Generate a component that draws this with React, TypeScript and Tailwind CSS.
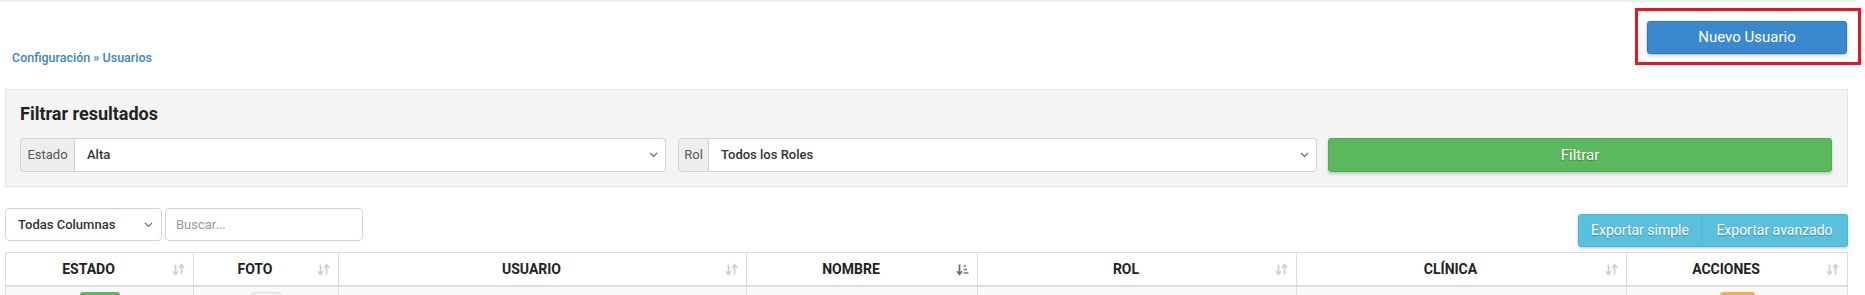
import React from "react";

const SortBoth = () => (
  <svg width="13" height="13" viewBox="0 0 13 13" fill="none">
    <path d="M3.5 1.5V11" stroke="#cfcfcf" strokeWidth="1.8" />
    <path d="M1 8.3L3.5 11.5L6 8.3" stroke="#cfcfcf" strokeWidth="1.6" fill="none" />
    <path d="M9.5 2V11.5" stroke="#cfcfcf" strokeWidth="1.8" />
    <path d="M7 4.7L9.5 1.5L12 4.7" stroke="#cfcfcf" strokeWidth="1.6" fill="none" />
  </svg>
);

const SortAsc = () => (
  <svg width="13" height="13" viewBox="0 0 13 13" fill="none">
    <path d="M3.5 1.5V11" stroke="#6f6f6f" strokeWidth="1.8" />
    <path d="M1 8.3L3.5 11.5L6 8.3" stroke="#6f6f6f" strokeWidth="1.6" fill="none" />
    <path d="M7.5 3H10" stroke="#6f6f6f" strokeWidth="1.4" />
    <path d="M7.5 6.5H11" stroke="#6f6f6f" strokeWidth="1.4" />
    <path d="M7.5 10H12.5" stroke="#6f6f6f" strokeWidth="1.4" />
  </svg>
);

const Chevron = () => (
  <svg width="9" height="6" viewBox="0 0 9 6" fill="none">
    <path d="M1 1L4.5 4.5L8 1" stroke="#666" strokeWidth="1.1" />
  </svg>
);

const cols: { label: string; w: string; sort: "both" | "asc"; last?: boolean }[] = [
  { label: "ESTADO", w: "w-[188px]", sort: "both" },
  { label: "FOTO", w: "w-[145px]", sort: "both" },
  { label: "USUARIO", w: "w-[408px]", sort: "both" },
  { label: "NOMBRE", w: "w-[231px]", sort: "asc" },
  { label: "ROL", w: "w-[319px]", sort: "both" },
  { label: "CLÍNICA", w: "w-[330px]", sort: "both" },
  { label: "ACCIONES", w: "w-[220px]", sort: "both", last: true },
];

export default function App() {
  return (
    <div className="w-[1865px] h-[295px] overflow-hidden bg-white font-['Roboto',sans-serif] text-[#333]">
      <div className="h-[2px] w-[1856px] bg-[#ececec]" />

      <div className="mt-[6px] flex items-start justify-between pr-[4px]">
        <div className="ml-[12px] mt-[43px] text-[12.5px] font-medium leading-[14px] text-[#3a85c6]">
          Configuración » Usuarios
        </div>
        <div className="border-[3px] border-[#e5171f] pl-[9px] pr-[11px] pt-[10px] pb-[8px]">
          <button className="flex h-[33px] w-[200px] items-center justify-center rounded-[3px] border border-[#2f79b9] bg-[#3a89cf] text-[15px] text-white shadow-[0_1px_3px_rgba(0,0,0,0.3)]">
            Nuevo Usuario
          </button>
        </div>
      </div>

      <div className="ml-[5px] mt-[24px] w-[1843px] border border-[#e4e4e4] bg-[#f4f4f4] px-[14px] pt-[14px] pb-[14px]">
        <div className="text-[18px] font-bold leading-[20px] text-[#222]">Filtrar resultados</div>
        <div className="mt-[14px] flex h-[34px]">
          <div className="flex w-[646px]">
            <div className="flex w-[55px] items-center justify-center rounded-l-[4px] border border-[#d2d2d2] bg-[#eeeeee] text-[13px] text-[#555]">
              Estado
            </div>
            <div className="flex flex-1 items-center justify-between rounded-r-[4px] border border-l-0 border-[#d2d2d2] bg-white pl-[12px] pr-[7px]">
              <span className="text-[13px] font-medium text-[#333]">Alta</span>
              <Chevron />
            </div>
          </div>
          <div className="ml-[12px] flex w-[639px]">
            <div className="flex w-[31px] items-center justify-center rounded-l-[4px] border border-[#d2d2d2] bg-[#eeeeee] text-[13px] text-[#555]">
              Rol
            </div>
            <div className="flex flex-1 items-center justify-between rounded-r-[4px] border border-l-0 border-[#d2d2d2] bg-white pl-[12px] pr-[7px]">
              <span className="text-[13px] font-medium text-[#333]">Todos los Roles</span>
              <Chevron />
            </div>
          </div>
          <button className="ml-[11px] flex w-[504px] items-center justify-center rounded-[3px] border border-[#4cae4c] bg-[#5cb85c] text-[15px] text-white shadow-[0_2px_3px_rgba(0,0,0,0.2)] [text-shadow:0_1px_1px_rgba(0,0,0,0.35)]">
            Filtrar
          </button>
        </div>
      </div>

      <div className="ml-[5px] mt-[21px] flex w-[1843px] items-end justify-between">
        <div className="mb-[6px] flex h-[33px] gap-[3px]">
          <div className="flex w-[157px] items-center justify-between rounded-[4px] border border-[#d2d2d2] bg-white pl-[12px] pr-[8px]">
            <span className="text-[13px] font-medium text-[#333]">Todas Columnas</span>
            <Chevron />
          </div>
          <div className="flex w-[198px] items-center rounded-[4px] border border-[#d2d2d2] bg-white pl-[10px]">
            <span className="text-[13px] text-[#999]">Buscar...</span>
          </div>
        </div>
        <div className="flex h-[33px] rounded-[3px] shadow-[0_1px_3px_rgba(0,0,0,0.25)]">
          <button className="flex w-[124px] items-center justify-center rounded-l-[3px] border border-[#46b8da] bg-[#5bc0de] text-[14px] text-white [text-shadow:0_1px_1px_rgba(0,0,0,0.3)]">
            Exportar simple
          </button>
          <button className="flex w-[146px] items-center justify-center rounded-r-[3px] border border-l-0 border-[#46b8da] bg-[#5bc0de] text-[14px] text-white [text-shadow:0_1px_1px_rgba(0,0,0,0.3)]">
            Exportar avanzado
          </button>
        </div>
      </div>

      <div className="ml-[5px] mt-[5px] w-[1843px] border-x border-t border-[#dddddd]">
        <div className="flex border-b-2 border-[#dddddd]">
          {cols.map((c) => (
            <div
              key={c.label}
              className={`relative flex h-[32px] items-center justify-center pl-[8px] pr-[30px] ${c.w} ${c.last ? "" : "border-r border-[#dddddd]"}`}
            >
              <span className="text-[14px] font-bold text-[#222]">{c.label}</span>
              <span className="absolute right-[8px] top-[10px]">{c.sort === "asc" ? <SortAsc /> : <SortBoth />}</span>
            </div>
          ))}
        </div>
        <div className="flex h-[20px] bg-[#f9f9f9]">
          {cols.map((c, i) => (
            <div
              key={c.label}
              className={`flex justify-center pt-[5px] ${c.w} ${c.last ? "" : "border-r border-[#dddddd]"}`}
            >
              {i === 0 && <div className="h-[14px] w-[40px] rounded-[3px] bg-[#5cb85c]" />}
              {i === 1 && <div className="h-[14px] w-[30px] rounded-[3px] border border-[#dddddd] bg-[#f2f2f2]" />}
              {i === 6 && <div className="h-[14px] w-[35px] rounded-[3px] bg-[#f0ad4e]" />}
            </div>
          ))}
        </div>
      </div>
    </div>
  );
}
